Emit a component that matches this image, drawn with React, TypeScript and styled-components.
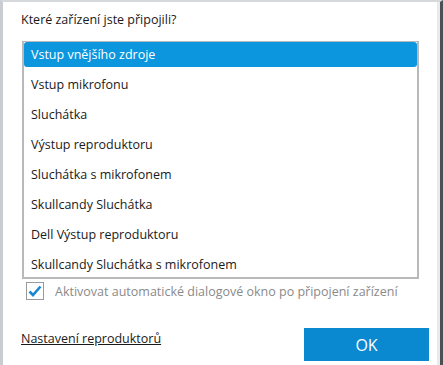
import React, { useState } from "react";
import styled, { createGlobalStyle } from "styled-components";

const GlobalStyle = createGlobalStyle`
  html, body {
    margin: 0;
    padding: 0;
    background: #ffffff;
  }
  body {
    font-family: "Open Sans", "Noto Sans", "Liberation Sans", sans-serif;
  }
`;

const Window = styled.div`
  box-sizing: border-box;
  width: 443px;
  height: 365px;
  background: #ffffff;
  border-left: 3px solid #c9cdd2;
  border-top: 2px solid #d6d9dc;
  border-right: 3px solid #4d4f52;
  box-shadow: inset -3px 0 0 #e9eaeb;
  display: flex;
  flex-direction: column;
  padding: 10px 0 0 18px;
`;

const Question = styled.div`
  font-size: 12.5px;
  line-height: 16px;
  color: #1a1a1a;
  margin-bottom: 13px;
`;

const ListBox = styled.div`
  box-sizing: border-box;
  width: 397px;
  margin-left: 1px;
  border: 1px solid #b9b9b9;
  border-width: 1px 2px 2px 2px;
  display: flex;
  flex-direction: column;
  gap: 5px;
`;

const Item = styled.div<{ $active?: boolean }>`
  height: 25px;
  display: flex;
  align-items: center;
  padding-left: 7px;
  font-size: 12.5px;
  border-radius: 3px;
  cursor: default;
  color: ${({ $active }) => ($active ? "#ffffff" : "#1a1a1a")};
  background: ${({ $active }) => ($active ? "#0b96de" : "transparent")};
`;

const CheckRow = styled.label`
  display: flex;
  align-items: center;
  gap: 11px;
  margin: 3px 0 0 5px;
  font-size: 12.5px;
  color: #8a8a8a;
`;

const Box = styled.span`
  box-sizing: border-box;
  width: 18px;
  height: 18px;
  border: 1px solid #9a9a9a;
  display: flex;
  align-items: center;
  justify-content: center;
  background: #ffffff;
`;

const Footer = styled.div`
  display: flex;
  align-items: center;
  justify-content: space-between;
  margin-top: 28px;
  padding-right: 11px;
`;

const SpeakerLink = styled.a`
  font-size: 12.5px;
  color: #1a1a1a;
  text-decoration: underline;
  margin-top: -12px;
  cursor: pointer;
`;

const OkButton = styled.button`
  width: 125px;
  height: 33px;
  border: none;
  background: #0a88d0;
  color: #ffffff;
  font-family: inherit;
  font-size: 16px;
  cursor: pointer;
`;

const devices = [
  "Vstup vnějšího zdroje",
  "Vstup mikrofonu",
  "Sluchátka",
  "Výstup reproduktoru",
  "Sluchátka s mikrofonem",
  "Skullcandy Sluchátka",
  "Dell Výstup reproduktoru",
  "Skullcandy Sluchátka s mikrofonem",
];

export default function App() {
  const [selected, setSelected] = useState(0);
  return (
    <>
      <GlobalStyle />
      <Window>
        <Question>Které zařízení jste připojili?</Question>
        <ListBox>
          {devices.map((d, i) => (
            <Item key={d} $active={i === selected} onClick={() => setSelected(i)}>
              {d}
            </Item>
          ))}
        </ListBox>
        <CheckRow>
          <Box>
            <svg width="14" height="12" viewBox="0 0 14 12">
              <path d="M1.5 6.5 L5 10 L12.5 1.5" fill="none" stroke="#1a86d0" strokeWidth="2.6" />
            </svg>
          </Box>
          Aktivovat automatické dialogové okno po připojení zařízení
        </CheckRow>
        <Footer>
          <SpeakerLink>Nastavení reproduktorů</SpeakerLink>
          <OkButton>OK</OkButton>
        </Footer>
      </Window>
    </>
  );
}
